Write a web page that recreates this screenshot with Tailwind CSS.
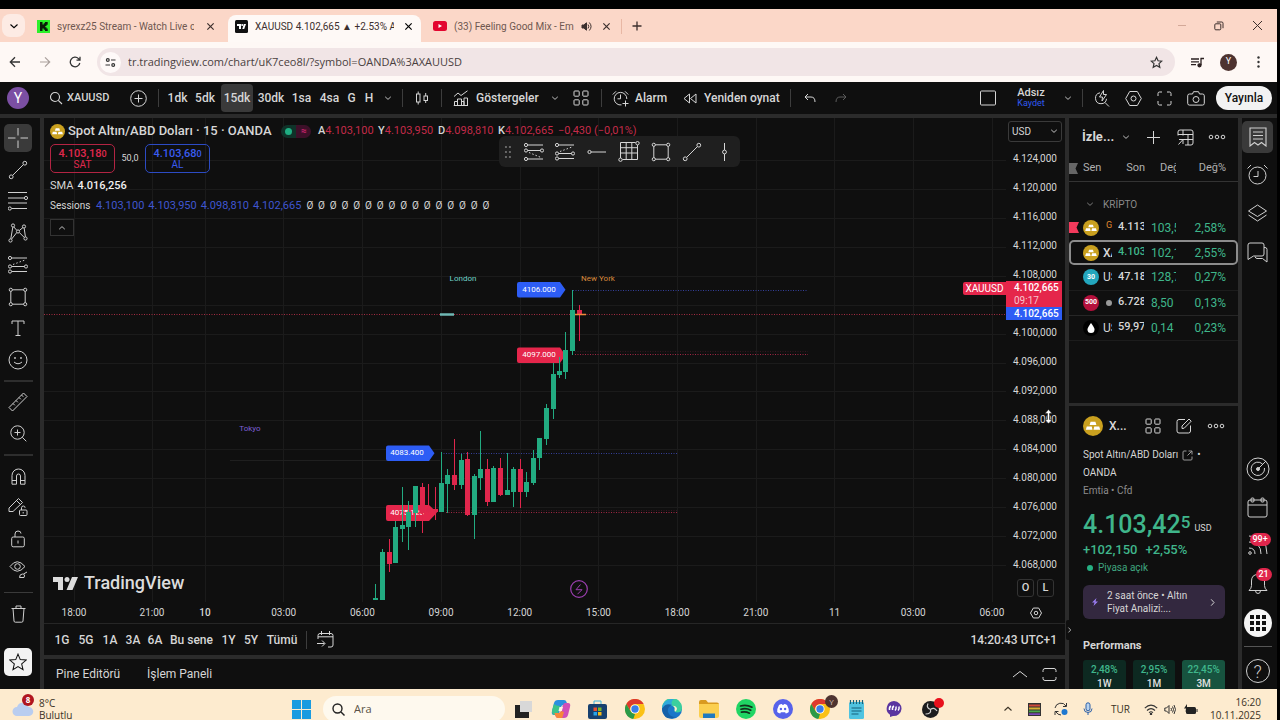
<!DOCTYPE html>
<html lang="tr">
<head>
<meta charset="utf-8">
<title>XAUUSD 4.102,665 ▲ +2.53% Adsız</title>
<script src="https://cdn.jsdelivr.net/npm/@tailwindcss/browser@4"></script>
</head>
<body class="bg-black">
<svg class="hidden" aria-hidden="true">
  <symbol id="chev" viewBox="0 0 10 10"><path d="M1.5 3.5 5 6.7 8.5 3.5" fill="none" stroke="currentColor" stroke-width="1.1"/></symbol>
  <symbol id="x" viewBox="0 0 10 10"><path d="M1.5 1.5l7 7M8.5 1.5l-7 7" fill="none" stroke="currentColor" stroke-width="1.3"/></symbol>
  <symbol id="more" viewBox="0 0 18 8"><g fill="none" stroke="currentColor"><circle cx="3" cy="4" r="1.8"/><circle cx="9" cy="4" r="1.8"/><circle cx="15" cy="4" r="1.8"/></g></symbol>
  <symbol id="tiles" viewBox="0 0 16 16"><g fill="none" stroke="currentColor"><rect x="1" y="1" width="5.200" height="5.200" rx=".8"/><rect x="9.800" y="1" width="5.200" height="5.200" rx=".8"/><rect x="1" y="9.800" width="5.200" height="5.200" rx=".8"/><rect x="9.800" y="9.800" width="5.200" height="5.200" rx=".8"/></g></symbol>
  <symbol id="gold" viewBox="0 0 20 20"><circle cx="10" cy="10" r="10" fill="#c9a01f"/><path d="M7.600 5.800h4.800l1 3.300H6.600zM3.800 10.400h4.900l.8 3.300H2.800zM11.300 10.400h4.900l1 3.300h-6.700z" fill="#fff"/></symbol>
  <symbol id="trend" viewBox="0 0 20 20"><g fill="none" stroke="currentColor"><circle cx="3.200" cy="16.800" r="1.900"/><circle cx="16.800" cy="3.200" r="1.900"/><path d="M4.600 15.400 15.400 4.600"/></g></symbol>
  <symbol id="rect" viewBox="0 0 20 20"><g fill="none" stroke="currentColor"><path d="M4.500 2.800h11M4.500 17.200h11M2.800 4.500v11M17.200 4.500v11"/><circle cx="2.800" cy="2.800" r="1.600"/><circle cx="17.200" cy="2.800" r="1.600"/><circle cx="2.800" cy="17.200" r="1.600"/><circle cx="17.200" cy="17.200" r="1.600"/></g></symbol>
  <symbol id="short" viewBox="0 0 20 20"><g fill="none" stroke="currentColor"><circle cx="2" cy="3" r="1.600"/><path d="M3.600 3H19M3.600 11.500h13M3.600 16.500H19"/><circle cx="2" cy="11.500" r="1.600"/><circle cx="18" cy="11.500" r="1.600"/><circle cx="2" cy="16.500" r="1.600"/><path d="M5 9.500l12-4.500" stroke-dasharray="1.500 2"/></g></symbol>
  <symbol id="long" viewBox="0 0 20 20"><g fill="none" stroke="currentColor"><circle cx="2" cy="3" r="1.600"/><path d="M3.600 3H19M3.600 8.500h13M3.600 17H19"/><circle cx="2" cy="8.500" r="1.600"/><circle cx="18" cy="8.500" r="1.600"/><circle cx="2" cy="17" r="1.600"/><path d="M5 10.500l12 5" stroke-dasharray="1.500 2"/></g></symbol>
  <symbol id="chrome" viewBox="0 0 20 20"><circle cx="10" cy="10" r="10" fill="#fbc116"/><path d="M1.300 5A10 10 0 0 1 18.700 5H10a5 5 0 0 0-4.300 7.500z" fill="#dd3a2e"/><path d="M1.300 5l4.400 7.500A5 5 0 0 0 10 15l-1.600 5A10 10 0 0 1 1.300 5z" fill="#2b9a48"/><path d="M14.300 12.500 10 20l-1.500-.1L12 14.600z" fill="#fbc116"/><circle cx="10" cy="10" r="4.600" fill="#fff"/><circle cx="10" cy="10" r="3.700" fill="#3a7de8"/></symbol>
</svg>

<div class="flex h-screen flex-col overflow-hidden pt-[9px] pr-[3px] font-['Roboto',sans-serif] text-[#d6d6d6]">

<!-- Browser tabs -->
<header class="shrink-0 text-[#3c2f2d]">
  <div class="flex h-[33px] items-center bg-[#fbd7c8] text-[10px]">
    <button aria-label="Sekme ara" class="ml-[2px] flex h-[23px] w-[23px] items-center justify-center rounded-lg bg-[#fdebe4] text-black"><svg class="size-[10px]"><use href="#chev"/></svg></button>
    <div class="mt-px ml-3 flex w-[191px] items-center">
      <svg class="size-[13px]" viewBox="0 0 13 13"><rect width="13" height="13" fill="#2df02a"/><path d="M3 2h2.500v2.500h1.200V3.300h1.200V2h2.800v2.800H9.500V6H8.300v1.200h1.200v1.200h1.200V11H8V9.800H6.700V8.600H5.500V11H3z" fill="#0a1a08"/></svg>
      <button class="ml-[7px] w-[137px] overflow-hidden text-left whitespace-nowrap text-[#6f5750]">syrexz25 Stream - Watch Live o</button>
      <button aria-label="Kapat" class="ml-3"><svg class="size-[9px]"><use href="#x"/></svg></button>
    </div>
    <div class="mt-[6px] flex h-[27px] w-[193px] items-center rounded-t-lg bg-[#fef9f6] pb-1 pl-[7px]">
      <svg class="size-[13px]" viewBox="0 0 13 13"><rect width="13" height="13" rx="1.500" fill="#111"/><path d="M2 4h4v5H4V6H2zM8.800 4H11L9.200 9H7.300z" fill="#fff"/><circle cx="7.200" cy="5" r="1" fill="#fff"/></svg>
      <button class="ml-[7px] w-[139px] overflow-hidden text-left whitespace-nowrap">XAUUSD 4.102,665 ▲ +2.53% A</button>
      <button aria-label="Kapat" class="ml-[10px] text-black"><svg class="size-[9px]"><use href="#x"/></svg></button>
    </div>
    <div class="mt-px ml-3 flex w-[189px] items-center border-r border-[#e8b7a4]">
      <svg class="h-[10px] w-[14px]" viewBox="0 0 14 10"><rect width="14" height="10" rx="2.500" fill="#e3062f"/><path d="M5.500 3v4L9 5z" fill="#fff"/></svg>
      <button class="ml-[7px] w-[121px] overflow-hidden text-left whitespace-nowrap text-[#6f5750]">(33) Feeling Good Mix - Em</button>
      <svg class="ml-[6px] size-[11px]" viewBox="0 0 11 11" fill="none" stroke="currentColor"><path d="M1 4h1.800L5.500 1.800v7.400L2.800 7H1z" fill="currentColor"/><path d="M7 3.500q1.500 2 0 4M8.300 1.500q3.500 4 0 8"/></svg>
      <button aria-label="Kapat" class="ml-[10px]"><svg class="size-[9px]"><use href="#x"/></svg></button>
    </div>
    <button aria-label="Yeni sekme" class="ml-[10px]"><svg class="size-[10px]" viewBox="0 0 10 10" stroke="currentColor" stroke-width="1.300"><path d="M5 .5v9M.5 5h9"/></svg></button>
    <div class="ml-auto flex items-center pr-[14px]">
      <button aria-label="Küçült" class="w-9"><svg class="mx-auto size-[10px]" viewBox="0 0 10 10" stroke="#d3a898"><path d="M1 4.500h8"/></svg></button>
      <button aria-label="Geri yükle" class="w-[37px]"><svg class="mx-auto size-[10px]" viewBox="0 0 10 10" fill="none" stroke="currentColor"><rect x=".8" y="2.800" width="6" height="6" rx="1"/><path d="M2.800 1h5q1.200 0 1.200 1.200v5"/></svg></button>
      <button aria-label="Pencereyi kapat" class="ml-[15px]"><svg class="size-[11px]" viewBox="0 0 11 11" stroke="currentColor"><path d="M1 1l9 9M10 1l-9 9"/></svg></button>
    </div>
  </div>
  <div class="flex h-10 items-center bg-[#fef8f5]">
    <button aria-label="Geri" class="w-[30px]"><svg class="mx-auto size-[12px]" viewBox="0 0 12 12" fill="none" stroke="#333" stroke-width="1.300"><path d="M11 6H1.500M6 1.300 1.300 6 6 10.700"/></svg></button>
    <button aria-label="İleri" class="w-[30px]"><svg class="mx-auto size-[12px]" viewBox="0 0 12 12" fill="none" stroke="#aaa09c" stroke-width="1.200"><path d="M1 6h9.500M6 1.300 10.700 6 6 10.700"/></svg></button>
    <button aria-label="Yenile" class="w-[30px]"><svg class="mx-auto size-[12px]" viewBox="0 0 12 12" fill="none" stroke="#333" stroke-width="1.300"><path d="M10.800 7A4.800 4.800 0 1 1 9.500 2.600L10.800 4M11 .8V4.200H7.500"/></svg></button>
    <div class="ml-[7px] flex h-7 flex-1 items-center rounded-full bg-[#f1e5e6] pr-[12px] pl-[3px]">
      <span class="flex size-[21px] items-center justify-center rounded-full bg-[#fef9f8]"><svg class="size-[11px]" viewBox="0 0 11 11" fill="none" stroke="#333" stroke-width="1.200"><circle cx="2.800" cy="3" r="1.400"/><path d="M6 3h4.500M.5 8H5"/><circle cx="8.200" cy="8" r="1.400"/></svg></span>
      <input aria-label="Adres çubuğu" class="ml-[7px] min-w-0 flex-1 bg-transparent font-['Open_Sans',sans-serif] text-[11px] text-[#4a3f40] outline-none" value="tr.tradingview.com/chart/uK7ceo8l/?symbol=OANDA%3AXAUUSD">
      <button aria-label="Yer işareti"><svg class="size-[13px]" viewBox="0 0 24 24" fill="none" stroke="#333" stroke-width="2.200"><path d="M12 2.500l2.900 6.300 6.800.7-5.100 4.600 1.500 6.800L12 17.400l-6.100 3.500 1.500-6.800L2.300 9.500l6.800-.7z"/></svg></button>
    </div>
    <button aria-label="Medya" class="ml-4"><svg class="size-[13px]" viewBox="0 0 13 13" fill="none" stroke="#2b2020" stroke-width="1.300"><path d="M0 3h8M0 5.800h8M0 8.600h5M10 2v7M9.500 2.500H13"/><circle cx="8.500" cy="9.300" r="1.500" fill="#2b2020"/></svg></button>
    <button class="ml-4 size-[17px] rounded-full bg-[#4e3330] text-[9px] text-white">Y</button>
    <button aria-label="Menü" class="mr-3 ml-[15px]"><svg class="h-3 w-[13px]" viewBox="0 0 13 12" fill="#333"><circle cx="6.500" cy="1.500" r="1.200"/><circle cx="6.500" cy="6" r="1.200"/><circle cx="6.500" cy="10.500" r="1.200"/></svg></button>
  </div>
</header>

<!-- TradingView top toolbar -->
<nav class="flex h-8 shrink-0 items-center bg-[#0f0f0f] text-[12px] font-medium">
  <div class="w-9"><span class="mx-auto flex size-[22px] items-center justify-center rounded-full bg-[#7b4fa3] text-[14px] font-normal text-white">Y</span></div>
  <button class="flex w-[88px] items-center pl-[13px]"><svg class="size-[14px]" viewBox="0 0 14 14" fill="none" stroke="currentColor" stroke-width="1.100"><circle cx="6" cy="6" r="4.500"/><path d="M9.300 9.300 13 13"/></svg><span class="ml-1 text-[11px]">XAUUSD</span></button>
  <button aria-label="Karşılaştır" class="w-7"><svg class="mx-auto size-[17px]" viewBox="0 0 17 17" fill="none" stroke="currentColor"><circle cx="8.500" cy="8.500" r="7.800"/><path d="M8.500 4.500v8M4.500 8.500h8"/></svg></button>
  <div class="flex w-3 justify-center"><i class="h-[18px] w-px bg-[#3d3d3d]"></i></div>
  <button class="w-[27px]">1dk</button>
  <button class="w-7">5dk</button>
  <button class="mx-[2px] h-7 w-8 rounded-[4px] bg-[#3a3a3a]">15dk</button>
  <button class="w-8">30dk</button>
  <button class="w-[29px]">1sa</button>
  <button class="w-[27px]">4sa</button>
  <button class="w-[17px]">G</button>
  <button class="w-[18px]">H</button>
  <button aria-label="Diğer zaman dilimleri" class="w-5"><svg class="mx-auto size-2"><use href="#chev"/></svg></button>
  <div class="flex w-2 justify-center"><i class="h-[18px] w-px bg-[#3d3d3d]"></i></div>
  <button aria-label="Mumlar" class="w-[31px]"><svg class="mx-auto size-[14px]" viewBox="0 0 14 14" fill="none" stroke="currentColor"><rect x="1.500" y="3" width="3.500" height="8"/><path d="M3.200.5V3M3.200 11v2.500M10.700 2v3M10.700 9.500V12"/><rect x="9" y="5" width="3.500" height="4.500"/></svg></button>
  <div class="flex w-2 justify-center"><i class="h-[18px] w-px bg-[#3d3d3d]"></i></div>
  <button class="flex w-[102px] items-center pl-2"><svg class="size-4" viewBox="0 0 16 16" fill="none" stroke="currentColor"><path d="M1 6.500 5 3l3 2.500L14.500.8M1.500 15.500v-4h3v4M4.500 15.500V9h4v6.500M8.500 15.500v-4h2.500v4M11 15.500V8h3.500v7.500M.8 15.500H15"/></svg><span class="ml-[7px]">Göstergeler</span></button>
  <button aria-label="Gösterge şablonları" class="w-4"><svg class="mx-auto size-2"><use href="#chev"/></svg></button>
  <button aria-label="Düzen" class="w-[35px]"><svg class="mx-auto size-4"><use href="#tiles"/></svg></button>
  <div class="flex w-[6px] justify-center"><i class="h-[18px] w-px bg-[#3d3d3d]"></i></div>
  <button class="flex w-[76px] items-center pl-2"><svg class="size-[17px]" viewBox="0 0 17 17" fill="none" stroke="currentColor"><path d="M9.500 14.900A6.300 6.300 0 1 1 14.800 9M8.500 4.500v4.300H5.500M.8 4.500 4 1.300M13 1.300l3.200 3.200M13.500 10.500v6M10.500 13.500h6"/></svg><span class="ml-[6px]">Alarm</span></button>
  <button class="flex w-[106px] items-center pl-[3px]"><svg class="h-[11px] w-[14px]" viewBox="0 0 14 11" fill="none" stroke="currentColor"><path d="M6.500 1v9L1 5.500zM13 1v9L7.500 5.500z"/></svg><span class="ml-[7px] whitespace-nowrap">Yeniden oynat</span></button>
  <div class="flex w-2 justify-center"><i class="h-[18px] w-px bg-[#3d3d3d]"></i></div>
  <button aria-label="Geri al" class="w-[31px]"><svg class="mx-auto size-3" viewBox="0 0 12 12" fill="none" stroke="currentColor"><path d="M4 2 1 5l3 3M1 5h6q4 0 4 5"/></svg></button>
  <button aria-label="Yinele" class="w-8 text-[#5c5c5c]"><svg class="mx-auto size-3" viewBox="0 0 12 12" fill="none" stroke="currentColor"><path d="M8 2l3 3-3 3M11 5H5q-4 0-4 5"/></svg></button>
  <div class="ml-auto flex items-center">
    <button aria-label="Yerleşim" class="w-8"><svg class="mx-auto size-4" viewBox="0 0 16 16" fill="none" stroke="currentColor"><rect x=".5" y="1" width="15" height="14" rx="1"/></svg></button>
    <button class="w-[54px] leading-[10px]"><span class="block text-[11px]">Adsız</span><span class="block text-[9px] font-normal text-[#2f5af0]">Kaydet</span></button>
    <button aria-label="Yerleşim menüsü" class="w-5"><svg class="mx-auto size-2"><use href="#chev"/></svg></button>
    <div class="flex w-2 justify-center"><i class="h-[18px] w-px bg-[#3d3d3d]"></i></div>
    <button aria-label="Hızlı arama" class="w-[31px]"><svg class="mx-auto size-[17px]" viewBox="0 0 17 17" fill="none" stroke="currentColor"><path d="M7 2.800a5.500 5.500 0 1 0 6.500 6M12 12.500l4 4M10.500.5 6.500 7h3l-.5 4 4.500-6.500h-3z"/></svg></button>
    <button aria-label="Ayarlar" class="w-8"><svg class="mx-auto size-[17px]" viewBox="0 0 17 17" fill="none" stroke="currentColor"><path d="M4.700 1.500h7.600l4 7-4 7H4.700l-4-7z"/><circle cx="8.500" cy="8.500" r="2.500"/></svg></button>
    <button aria-label="Tam ekran" class="w-[31px]"><svg class="mx-auto size-[15px]" viewBox="0 0 15 15" fill="none" stroke="currentColor"><path d="M1 5V2.500Q1 1 2.500 1H5M10 1h2.500Q14 1 14 2.500V5M14 10v2.500q0 1.500-1.500 1.500H10M5 14H2.500Q1 14 1 12.500V10"/></svg></button>
    <button aria-label="Ekran görüntüsü" class="w-[31px]"><svg class="mx-auto h-[15px] w-[18px]" viewBox="0 0 18 15" fill="none" stroke="currentColor"><path d="M2.500 3h3l1-2.300h5l1 2.300h3q1.800 0 1.800 1.800v7.500q0 1.800-1.800 1.800h-13Q.7 14.100.7 12.300V4.800Q.7 3 2.500 3z"/><circle cx="9" cy="8.500" r="3"/></svg></button>
    <button class="mx-[5px] h-6 w-14 rounded-full bg-[#f2f2f2] text-[#111]">Yayınla</button>
  </div>
</nav>

<!-- Workspace -->
<main class="flex min-h-0 flex-1 gap-1 bg-[#2b2b2b] pt-1">

  <!-- Drawing tools -->
  <aside class="flex w-10 shrink-0 flex-col bg-[#0f0f0f] pt-[6px] pl-1 text-[#cfcfcf]">
    <div class="flex h-[250px] flex-col justify-between">
      <button aria-label="İmleç" class="flex size-7 items-center justify-center rounded-[5px] bg-[#3a3a3a]"><svg class="size-5" viewBox="0 0 20 20" stroke="currentColor"><path d="M10 0v7.500M10 12.500V20M0 10h7.500M12.500 10H20"/></svg></button>
      <button aria-label="Trend çizgisi" class="flex size-7 items-center justify-center"><svg class="size-5"><use href="#trend"/></svg></button>
      <button aria-label="Fibonacci" class="flex size-7 items-center justify-center"><svg class="size-5" viewBox="0 0 20 20" fill="none" stroke="currentColor"><path d="M0 1.500h19M0 7h16.500M0 12h19M3.500 17.500H19"/><circle cx="18" cy="7" r="1.600"/><circle cx="1.800" cy="17.500" r="1.600"/></svg></button>
      <button aria-label="Formasyonlar" class="flex size-7 items-center justify-center"><svg class="size-5" viewBox="0 0 20 20" fill="none" stroke="currentColor"><circle cx="5" cy="2.500" r="1.600"/><circle cx="2.500" cy="17.500" r="1.600"/><circle cx="10" cy="8.500" r="1.600"/><circle cx="16" cy="3.500" r="1.600"/><circle cx="17.500" cy="15.500" r="1.600"/><path d="M4.800 4.200 2.800 15.800M5.800 4l3 3.300M11.300 7.500 15 4.500M16.200 5.200l1.200 8.600M8.800 9.500 3.500 16.200M11.300 9.500l5 5"/></svg></button>
      <button aria-label="Tahmin" class="flex size-7 items-center justify-center"><svg class="size-5"><use href="#short"/></svg></button>
      <button aria-label="Dikdörtgen" class="flex size-7 items-center justify-center"><svg class="size-5"><use href="#rect"/></svg></button>
      <button aria-label="Metin" class="flex size-7 items-center justify-center"><svg class="size-5" viewBox="0 0 20 20" fill="none" stroke="currentColor"><path d="M4 6V3h12v3M10 3v14M7.500 17.500h5"/></svg></button>
      <button aria-label="Simgeler" class="flex size-7 items-center justify-center"><svg class="size-5" viewBox="0 0 20 20" fill="none" stroke="currentColor"><circle cx="10" cy="10" r="9"/><path d="M6 12q4 3.500 8 0"/><circle cx="7" cy="8" r=".6"/><circle cx="13" cy="8" r=".6"/></svg></button>
    </div>
    <hr class="mt-[6px] w-[29px] border-t-2 border-[#2e2e2e]">
    <div class="mt-[6px] flex h-[59px] flex-col justify-between">
      <button aria-label="Ölçüm" class="flex size-7 items-center justify-center"><svg class="size-5" viewBox="0 0 20 20" fill="none" stroke="currentColor"><path d="M1 15.500 15.500 1 19 4.500 4.500 19zM5 11.500l1.800 1.800M8 8.500l1.800 1.800M11 5.500l1.800 1.800M13.500 3l1.800 1.800"/></svg></button>
      <button aria-label="Yakınlaştır" class="flex size-7 items-center justify-center"><svg class="size-[17px]" viewBox="0 0 17 17" fill="none" stroke="currentColor"><circle cx="7.500" cy="7.500" r="6.700"/><path d="M7.500 4.500v6M4.500 7.500h6M12.300 12.300l4 4"/></svg></button>
    </div>
    <hr class="mt-[7px] w-[29px] border-t-2 border-[#2e2e2e]">
    <div class="mt-[6px] flex h-[122px] flex-col justify-between">
      <button aria-label="Mıknatıs" class="flex size-7 items-center justify-center"><svg class="h-[17px] w-[15px]" viewBox="0 0 15 17" fill="none" stroke="currentColor"><path d="M1 16.200V7.500a6.500 6.500 0 0 1 13 0v8.700H9.500V8a2 2 0 0 0-4 0v8.200zM1 12.500h4.500M9.500 12.500H14"/></svg></button>
      <button aria-label="Çizim modunda kal" class="flex size-7 items-center justify-center"><svg class="size-5" viewBox="0 0 20 20" fill="none" stroke="currentColor"><path d="M1 14.500V11L10.500 1.500l4 4L5 14.500zM8.500 3.500l4 4"/><rect x="11.500" y="13" width="7.500" height="5.500" rx="1"/><path d="M13.500 13v-2.200q0-1.800 1.800-1.800t1.800 1.800M15.200 15v1.500"/></svg></button>
      <button aria-label="Kilitle" class="flex size-7 items-center justify-center"><svg class="h-[18px] w-[14px]" viewBox="0 0 14 18" fill="none" stroke="currentColor"><rect x=".7" y="7" width="12.600" height="9.800" rx="1.500"/><path d="M4 7V4q0-3 3-3t3 2.500M7 10.500v3"/></svg></button>
      <button aria-label="Gizle" class="flex size-7 items-center justify-center"><svg class="size-[19px]" viewBox="0 0 19 19" fill="none" stroke="currentColor"><path d="M1 6.500Q8 -3 16 6.500 8 16 1 6.500z"/><circle cx="8.500" cy="6.500" r="2.800"/><path d="M10.500 17.500q0-3.500 3-3.500t1.500 3.500zM14.500 14l3.500-2"/></svg></button>
    </div>
    <hr class="mt-2 w-[29px] border-[#3a3a3a]">
    <button aria-label="Sil" class="mt-[7px] flex size-7 items-center justify-center"><svg class="h-[18px] w-[15px]" viewBox="0 0 15 18" fill="none" stroke="currentColor"><path d="M.5 3.500h14M5 3.500V1h5v2.500M2 3.500l1 12.500q.1 1.200 1.300 1.200h6.400q1.200 0 1.300-1.200l1-12.500"/></svg></button>
    <button aria-label="Favoriler" class="mt-5 flex size-7 items-center justify-center rounded-[5px] bg-[#f3f3f3]"><svg class="size-[18px]" viewBox="0 0 24 24" fill="none" stroke="#111" stroke-width="1.400"><path d="M12 1.500l3 7.300 7.900.6-6 5.200 1.800 7.700L12 18.200l-6.700 4.100 1.800-7.700-6-5.200 7.900-.6z"/></svg></button>
  </aside>

  <!-- Chart column -->
  <section class="relative flex min-w-0 flex-1 flex-col gap-1">
    <div class="flex min-h-0 flex-1 flex-col bg-[#0f0f0f]">
      <div class="flex min-h-0 flex-1">
        <div class="relative min-w-0 flex-1 overflow-hidden">
          <svg class="block h-full w-full text-[8px]">
            <g transform="translate(-44 -118)">
              <g id="grid" stroke="#1b1b1b"></g>
              <path d="M230 460.500H440" stroke="#1f1f1f"/>
              <g fill="none" stroke-dasharray="1 1.500">
                <path d="M573 290.500H808M441 453.500H677" stroke="#34409a"/>
                <path d="M575 354.500H808M446 512.500H677" stroke="#a12744"/>
                <path d="M575 351.500H808M446 510.500H677" stroke="#33161f"/>
                <path d="M44 314.500H1006" stroke="#a52c43"/>
              </g>
              <path d="M519 282h41l5.500 7.800-5.500 7.700h-41q-2 0-2-2v-11.500q0-2 2-2zM388 445.500h41l5.500 7.800-5.500 7.700h-41q-2 0-2-2v-11.500q0-2 2-2z" fill="#2d5df5"/>
              <path d="M519 347.500h41l5.500 7.800-5.500 7.700h-41q-2 0-2-2v-11.500q0-2 2-2zM388 505h41l8 7.500-8 8.500h-41q-2 0-2-2v-12q0-2 2-2z" fill="#e5264b"/>
              <g fill="#fff" text-anchor="middle"><text x="539" y="292">4106.000</text><text x="539" y="357">4097.000</text><text x="407" y="455">4083.400</text><text x="407" y="515">4075.125</text></g>
              <g text-anchor="middle"><text x="463" y="281" fill="#6fd3c9">London</text><text x="598" y="281" fill="#d98a3c">New York</text><text x="250" y="431" fill="#7d5fd6">Tokyo</text></g>
              <g id="candles"></g>
              <path d="M440 314.500h14" stroke="#6fb8b4" stroke-width="2.500"/>
              <path d="M575 314.500h11" stroke="#f08a3c" stroke-width="1.500"/>
              <g fill="none" stroke="#9c3fb0"><circle cx="579" cy="589" r="8.300" stroke-width="1.200"/><path d="M580.500 584.500l-4.500 5.200h6l-4.500 4.500"/></g>
            </g>
          </svg>

          <!-- Legend -->
          <div class="absolute top-[5px] left-[6px] text-[10px] leading-4">
            <div class="flex h-4 items-center whitespace-nowrap">
              <svg class="size-[15px]"><use href="#gold"/></svg>
              <h1 class="ml-[3px] w-[213px] text-[13px] font-medium">Spot Altın/ABD Doları · 15 · OANDA</h1>
              <span class="flex h-[13px] w-[30px] items-center justify-around rounded-full bg-linear-to-r from-[#0f3329] from-50% to-[#3d1029] to-50% text-[#d1246e]"><i class="size-[7px] rounded-full bg-[#1fae82]"></i><b class="text-[10px]">≈</b></span>
              <dl class="ml-[7px] flex text-[11px] text-[#c42b49]">
                <div class="flex w-[60px]"><dt class="font-medium text-[#d6d6d6]">A</dt><dd>4.103,100</dd></div>
                <div class="flex w-[60px]"><dt class="font-medium text-[#d6d6d6]">Y</dt><dd>4.103,950</dd></div>
                <div class="flex w-[60px]"><dt class="font-medium text-[#d6d6d6]">D</dt><dd>4.098,810</dd></div>
                <div class="flex w-[60px]"><dt class="font-medium text-[#d6d6d6]">K</dt><dd>4.102,665</dd></div>
                <dd>−0,430 (−0,01%)</dd>
              </dl>
            </div>
            <div class="mt-[5px] flex items-center text-center leading-[11px]">
              <button class="h-[29px] w-[65px] rounded-[5px] border border-[#b32443] text-[#e0284e]"><span class="block text-[11px] font-medium">4.103,18<sup class="top-0 text-[9px]">0</sup></span><span class="block">SAT</span></button>
              <span class="w-[30px] text-[9px]">50,0</span>
              <button class="h-[29px] w-[65px] rounded-[5px] border border-[#2c4bc4] text-[#3a5cf0]"><span class="block text-[11px] font-medium">4.103,68<sup class="top-0 text-[9px]">0</sup></span><span class="block">AL</span></button>
            </div>
            <p class="mt-[5px] flex text-[11px]">SMA<b class="ml-1 font-medium text-[#f0f0f0]">4.016,256</b></p>
            <p class="mt-1 flex gap-1 text-[11px] text-[#3f56cf]"><span class="w-[42px] text-[10px] text-[#d6d6d6]">Sessions</span><span>4.103,100</span><span>4.103,950</span><span>4.098,810</span><span>4.102,665</span><span class="ml-px flex w-[183px] justify-between text-[10px] text-[#d6d6d6]"><b class="font-normal">Ø</b><b class="font-normal">Ø</b><b class="font-normal">Ø</b><b class="font-normal">Ø</b><b class="font-normal">Ø</b><b class="font-normal">Ø</b><b class="font-normal">Ø</b><b class="font-normal">Ø</b><b class="font-normal">Ø</b><b class="font-normal">Ø</b><b class="font-normal">Ø</b><b class="font-normal">Ø</b><b class="font-normal">Ø</b><b class="font-normal">Ø</b><b class="font-normal">Ø</b><b class="font-normal">Ø</b></span></p>
            <button aria-label="Göstergeleri gizle" class="mt-[5px] flex h-[17px] w-6 items-center justify-center border border-[#333]"><svg class="size-2 rotate-180"><use href="#chev"/></svg></button>
          </div>

          <!-- Favourite drawing tools -->
          <div class="absolute top-[18px] left-[455px] flex h-[31px] w-[241px] items-center rounded-md bg-[#1f1f1f] pl-[2px]">
            <svg class="h-3 w-[14px]" viewBox="0 0 14 12" fill="#666"><path d="M4 0h2v2H4zM8 0h2v2H8zM4 5h2v2H4zM8 5h2v2H8zM4 10h2v2H4zM8 10h2v2H8z"/></svg>
            <button aria-label="Uzun pozisyon" class="ml-[3px] flex w-8 justify-center"><svg class="size-5"><use href="#long"/></svg></button>
            <button aria-label="Kısa pozisyon" class="flex w-8 justify-center"><svg class="size-5"><use href="#short"/></svg></button>
            <button aria-label="Yatay ışın" class="flex w-8 justify-center"><svg class="size-5" viewBox="0 0 20 20" fill="none" stroke="currentColor"><circle cx="2.500" cy="10" r="1.600"/><path d="M4 10h15"/></svg></button>
            <button aria-label="Izgara" class="flex w-8 justify-center"><svg class="h-[21px] w-[22px]" viewBox="0 0 22 21" fill="none" stroke="currentColor"><path d="M2.500 1.500h15M2.500 1.500V17M2.500 6.700h17M2.500 12h17M4.500 18.500h15M8.200 1.500v17M13.800 1.500v17M19.500 4v14.500"/><circle cx="19.500" cy="2.200" r="1.700"/><circle cx="2.500" cy="18.700" r="1.700"/></svg></button>
            <button aria-label="Dikdörtgen" class="flex w-8 justify-center"><svg class="size-5"><use href="#rect"/></svg></button>
            <button aria-label="Trend çizgisi" class="flex w-8 justify-center"><svg class="size-5"><use href="#trend"/></svg></button>
            <button aria-label="Dikey çizgi" class="flex w-8 justify-center"><svg class="size-5" viewBox="0 0 20 20" fill="none" stroke="currentColor"><path d="M10.500 1v7M10.500 12v7"/><circle cx="10.500" cy="10" r="1.900"/></svg></button>
          </div>

          <!-- Brand -->
          <a href="#" class="absolute bottom-[9px] left-[9px] flex items-center gap-[6px] text-[18px] leading-5 font-medium text-[#dcdcdc]"><svg class="h-[13px] w-[25px]" viewBox="0 0 25 13" fill="currentColor"><path d="M0 0h10v13H5V5H0zM19 0h6l-5.500 13h-6z"/><circle cx="14" cy="2.500" r="2.500"/></svg>TradingView</a>
          <span class="absolute top-[164px] right-0 flex h-[13px] w-[43px] items-center justify-center rounded-l-[2px] bg-[#e5264b] text-[10px] text-white">XAUUSD</span>
        </div>

        <!-- Price scale -->
        <div class="relative flex w-[59px] shrink-0 flex-col">
          <div class="relative mt-[3px] ml-[2px] w-[54px]">
            <select aria-label="Para birimi" class="block h-[21px] w-full appearance-none rounded-[3px] border border-[#3a3a3a] bg-[#0f0f0f] pl-[3px] text-[10px]"><option>USD</option></select>
            <svg class="pointer-events-none absolute top-[6px] right-1 size-2"><use href="#chev"/></svg>
          </div>
          <ol class="mt-[11px] flex flex-1 flex-col justify-between pl-[7px] text-[10px] leading-3">
            <li>4.124,000</li><li>4.120,000</li><li>4.116,000</li><li>4.112,000</li><li>4.108,000</li><li>&nbsp;</li><li>4.100,000</li><li>4.096,000</li><li>4.092,000</li><li>4.088,000</li><li>4.084,000</li><li>4.080,000</li><li>4.076,000</li><li>4.072,000</li><li>4.068,000</li>
          </ol>
          <div class="mt-2 mb-[5px] ml-[11px] flex gap-[3px] text-[11px] font-medium">
            <button class="h-[18px] w-[17px] rounded-[3px] border border-[#333]">O</button>
            <button class="h-[18px] w-[17px] rounded-[3px] border border-[#333]">L</button>
          </div>
          <div class="absolute top-[163px] left-0 w-14 text-[10px] leading-[13px] font-medium text-white">
            <p class="bg-[#e5264b] pl-2">4.102,665<br><span class="font-normal text-[#f6c4ce]">09:17</span></p>
            <p class="bg-[#2d5df5] pl-2">4.102,665</p>
          </div>
          <svg class="absolute top-[291px] left-[38px] h-[15px] w-[9px]" viewBox="0 0 9 15" fill="#fff" stroke="#222" stroke-width=".6"><path d="M4.500.5 8 4.500H5.500v6H8l-3.500 4-3.500-4h2.500v-6H1z"/></svg>
        </div>
      </div>

      <!-- Time scale -->
      <div class="flex h-[21px] shrink-0 items-center pl-2 text-center text-[10px]">
        <span class="w-11">18:00</span><span class="ml-[34px] w-11">21:00</span>
        <div class="ml-[9px] flex flex-1 justify-between"><b class="w-11 font-medium">10</b><span class="w-11">03:00</span><span class="w-11">06:00</span><span class="w-11">09:00</span><span class="w-11">12:00</span><span class="w-11">15:00</span><span class="w-11">18:00</span><span class="w-11">21:00</span><span class="w-11">11</span><span class="w-11">03:00</span><span class="w-11">06:00</span></div>
        <button aria-label="Eksen ayarları" class="mr-[23px] ml-4"><svg class="size-3" viewBox="0 0 17 17" fill="none" stroke="currentColor" stroke-width="1.400"><path d="M4.700 1.500h7.600l4 7-4 7H4.700l-4-7z"/><circle cx="8.500" cy="8.500" r="2.500"/></svg></button>
      </div>

      <!-- Ranges -->
      <div class="flex h-8 shrink-0 items-center border-t border-[#262626] pl-[6px] text-[12px] font-medium">
        <button class="w-6">1G</button><button class="w-6">5G</button><button class="w-6">1A</button><button class="w-[22px]">3A</button><button class="w-[22px]">6A</button><button class="w-[51px] whitespace-nowrap">Bu sene</button><button class="w-[23px]">1Y</button><button class="w-[22px]">5Y</button><button class="w-10">Tümü</button>
        <i class="ml-1 h-[18px] w-px bg-[#3d3d3d]"></i>
        <button aria-label="Tarihe git" class="ml-[10px]"><svg class="size-[17px]" viewBox="0 0 17 17" fill="none" stroke="currentColor"><path d="M1 8V4.500Q1 2.500 3 2.500h11q2 0 2 2V14q0 2-2 2h-3M1 5.800h15M4.500 0v4M12.500 0v4M0 12.500h7.500M5 9.500l3 3-3 3"/></svg></button>
        <span class="mr-2 ml-auto">14:20:43 UTC+1</span>
      </div>
    </div>

    <div class="flex h-[30px] shrink-0 items-center bg-[#0f0f0f] pl-3 text-[12px]">
      <button class="w-[91px] text-left">Pine Editörü</button>
      <button>İşlem Paneli</button>
      <button aria-label="Paneli aç" class="ml-auto"><svg class="h-2 w-4" viewBox="0 0 16 8" fill="none" stroke="currentColor"><path d="M1 7l7-5.500L15 7"/></svg></button>
      <button aria-label="Paneli büyüt" class="mr-2 ml-[14px]"><svg class="size-[15px]" viewBox="0 0 15 15" fill="none" stroke="currentColor"><path d="M1 5V3.500Q1 1.500 3 1.500h9q2 0 2 2V5M1 10v1.500q0 2 2 2h9q2 0 2-2V10"/></svg></button>
    </div>
    <button aria-label="Yan paneli gizle" class="absolute -right-2 bottom-[49px] z-10 flex h-5 w-[7px] items-center justify-center rounded-[2px] bg-[#0f0f0f]"><svg class="size-2 -rotate-90"><use href="#chev"/></svg></button>
  </section>

  <!-- Watchlist and details -->
  <section class="flex w-[169px] shrink-0 flex-col gap-[3px]">
    <div class="h-[285px] bg-[#0f0f0f]">
      <div class="flex h-[38px] items-center pl-[13px]">
        <button class="w-9 text-left text-[13px] font-bold">İzle...</button>
        <svg class="ml-1 size-2"><use href="#chev"/></svg>
        <button aria-label="Sembol ekle" class="ml-[17px]"><svg class="size-[13px]" viewBox="0 0 13 13" stroke="currentColor"><path d="M6.500 0v13M0 6.500h13"/></svg></button>
        <button aria-label="Tablo görünümü" class="ml-[17px]"><svg class="size-[17px]" viewBox="0 0 17 17" fill="none" stroke="currentColor"><path d="M1 6.500V3Q1 1 3 1h11q2 0 2 2v11q0 2-2 2H8M1 5.500h15M6 1v5.500M11 5.500V16M6 10.500h10M1.500 15.500l4.500-5M2 10.500h4V15"/></svg></button>
        <button aria-label="Diğer" class="ml-[14px]"><svg class="h-2 w-[18px]"><use href="#more"/></svg></button>
      </div>
      <table class="w-full table-fixed text-left text-[12px]">
        <colgroup><col class="w-[14px]"><col class="w-5"><col class="w-[11px]"><col class="w-[31px]"><col class="w-[31px]"><col></colgroup>
        <thead class="text-[11px] text-[#b0b0b0]">
          <tr class="h-[25px] border-b border-[#333]"><th><svg class="h-[11px] w-[9px]" viewBox="0 0 9 11" fill="#666"><path d="M0 0h9L6.500 5.500 9 11H0z"/></svg></th><th colspan="2" class="font-normal">Sen</th><th class="text-right font-normal">Son</th><th class="pl-[15px] font-normal"><div class="w-4 overflow-hidden">Değ</div></th><th class="pr-3 text-right font-normal">Değ%</th></tr>
        </thead>
        <tbody>
          <tr class="h-[34px] text-[10px] text-[#8a8a8a]"><td></td><td class="pt-3"><svg class="ml-[3px] size-2"><use href="#chev"/></svg></td><td colspan="4" class="pt-3">KRİPTO</td></tr>
          <tr class="h-[25px]"><td><svg class="h-[11px] w-[10px]" viewBox="0 0 10 11" fill="#f23a5c"><path d="M0 0h10L7.500 5.500 10 11H0z"/></svg></td><td><svg class="size-4"><use href="#gold"/></svg></td><td class="pb-1 pl-[3px] text-[9px] text-[#e08a2e]">G</td><td class="pl-1 text-[11px] font-medium"><div class="w-[26px] overflow-hidden">4.113</div></td><td class="pl-[6px] text-[#3fb68b]"><div class="w-[25px] overflow-hidden">103,5</div></td><td class="pr-3 text-right text-[#3fb68b]">2,58%</td></tr>
          <tr class="h-[25px] rounded-[5px] outline-2 -outline-offset-2 outline-[#8c8c8c]"><td></td><td><svg class="size-4"><use href="#gold"/></svg></td><td><div class="w-[9px] overflow-hidden font-medium">XA</div></td><td class="pl-1 text-[11px] font-medium text-[#3fb68b]"><div class="w-[26px] overflow-hidden">4.103</div></td><td class="pl-[6px] text-[#3fb68b]"><div class="w-[25px] overflow-hidden">102,1</div></td><td class="pr-3 text-right text-[#3fb68b]">2,55%</td></tr>
          <tr class="h-[25px] border-b border-[#1c1c1c]"><td></td><td><span class="flex size-4 items-center justify-center rounded-full bg-[#23a6bd] text-[7px] font-bold text-white">30</span></td><td><div class="w-[9px] overflow-hidden">US</div></td><td class="pl-1 text-[11px] font-medium"><div class="w-[26px] overflow-hidden">47.18</div></td><td class="pl-[6px] text-[#3fb68b]"><div class="w-[25px] overflow-hidden">128,7</div></td><td class="pr-3 text-right text-[#3fb68b]">0,27%</td></tr>
          <tr class="h-[25px] border-b border-[#262626]"><td></td><td><span class="flex size-4 items-center justify-center rounded-full bg-[#b5103c] text-[7px] font-bold text-white">500</span></td><td><i class="ml-[3px] block size-[6px] rounded-full bg-[#9a9a9a]"></i></td><td class="pl-1 text-[11px] font-medium"><div class="w-[26px] overflow-hidden">6.728</div></td><td class="pl-[6px] text-[#3fb68b]">8,50</td><td class="pr-3 text-right text-[#3fb68b]">0,13%</td></tr>
          <tr class="h-[25px] border-b border-[#1c1c1c]"><td></td><td><span class="flex size-4 items-center justify-center rounded-full bg-black"><svg class="h-[10px] w-2" viewBox="0 0 8 10" fill="#fff"><path d="M4 0q3.500 4.500 3.500 6.500a3.500 3.500 0 0 1-7 0Q.5 4.500 4 0z"/></svg></span></td><td><div class="w-[9px] overflow-hidden">US</div></td><td class="pl-1 text-[11px] font-medium"><div class="w-[26px] overflow-hidden">59,97</div></td><td class="pl-[6px] text-[#3fb68b]">0,14</td><td class="pr-3 text-right text-[#3fb68b]">0,23%</td></tr>
        </tbody>
      </table>
    </div>
    <div class="min-h-0 flex-1 overflow-hidden bg-[#0f0f0f] pr-[13px] pl-[14px]">
      <div class="flex h-10 items-center">
        <svg class="size-5"><use href="#gold"/></svg>
        <b class="ml-[6px] w-[36px] text-[12px] font-medium">X...</b>
        <svg class="size-4"><use href="#tiles"/></svg>
        <svg class="ml-[15px] size-4" viewBox="0 0 16 16" fill="none" stroke="currentColor"><path d="M9 1.500H3Q1 1.500 1 3.500V13q0 2 2 2h9.500q2 0 2-2V7.500M6 10.500V8l7-7 2.200 2.200-7 7z"/></svg>
        <svg class="ml-[15px] h-2 w-[18px] shrink-0"><use href="#more"/></svg>
      </div>
      <p class="flex items-center text-[10px] leading-[18px] whitespace-nowrap">Spot Altın/ABD Doları<svg class="mr-1 ml-1 size-[11px]" viewBox="0 0 11 11" fill="none" stroke="#999"><path d="M4.500 1H2Q1 1 1 2v7q0 1 1 1h7q1 0 1-1V6.500M6.500 1H10v3.500M10 1 5.500 5.500"/></svg>•</p>
      <p class="text-[10px] leading-[18px]">OANDA</p>
      <p class="text-[10px] leading-[18px] text-[#8c8c8c]">Emtia • Cfd</p>
      <p class="mt-[10px] flex h-[30px] items-center whitespace-nowrap text-[#3fb68b]"><b class="text-[25px] font-medium">4.103,42</b><b class="mb-[5px] text-[17px] font-medium">5</b><small class="mt-2 ml-1 text-[9px] text-[#d6d6d6]">USD</small></p>
      <p class="mt-[2px] flex gap-2 text-[13px] leading-4 font-medium text-[#3fb68b]"><span>+102,150</span><span>+2,55%</span></p>
      <p class="mt-[2px] flex items-center gap-[5px] pl-1 text-[10px] leading-4 text-[#3fa57f]"><i class="size-[6px] rounded-full bg-[#26b083]"></i>Piyasa açık</p>
      <a href="#" class="mt-[9px] flex h-[34px] items-center rounded-md bg-[#33283f] text-[10px] leading-[13px]"><svg class="mx-[9px] h-2 w-[6px] shrink-0" viewBox="0 0 6 8" fill="#9a7cf0"><path d="M4.500 0 0 4.500h2.500L1.500 8 6 3.500H3.500z"/></svg><span class="flex-1">2 saat önce • Altın<br>Fiyat Analizi:...</span><svg class="mr-2 size-[9px] -rotate-90"><use href="#chev"/></svg></a>
      <h2 class="mt-[19px] text-[11px] leading-4 font-bold">Performans</h2>
      <div class="mt-[6px] grid grid-cols-3 gap-[7px] text-center text-[10px] leading-[14px] font-medium text-[#e0e0e0]">
        <p class="rounded-[3px] bg-[#0d2921] pt-[3px]"><span class="block text-[#3fb68b]">2,48%</span>1W</p>
        <p class="rounded-[3px] bg-[#0d2921] pt-[3px]"><span class="block text-[#3fb68b]">2,95%</span>1M</p>
        <p class="rounded-[3px] bg-[#17533f] pt-[3px]"><span class="block text-[#3fb68b]">22,45%</span>3M</p>
      </div>
    </div>
  </section>

  <!-- Right rail -->
  <aside class="flex w-[35px] shrink-0 flex-col items-center bg-[#0f0f0f] pr-1 text-[#d0d0d0]">
    <button aria-label="İzleme listesi" class="mt-[3px] flex h-8 w-[31px] shrink-0 items-center justify-center rounded-[5px] bg-[#3a3a3a]"><svg class="size-5" viewBox="0 0 20 20" fill="none" stroke="currentColor" stroke-width="1.100"><path d="M2 1h16v18l-4.500-3.500L10 18l-3.500-2.500L2 19zM5 5h10M5 8.500h10M5 12h10"/></svg></button>
    <button aria-label="Alarmlar" class="mt-[11px] shrink-0"><svg class="size-[21px]" viewBox="0 0 21 21" fill="none" stroke="currentColor"><circle cx="10.500" cy="11.500" r="8.500"/><path d="M11 7v5.500H6.500M.5 4.500 4 1M17 1l3.500 3.500"/></svg></button>
    <button aria-label="Nesne ağacı" class="mt-[19px] shrink-0"><svg class="h-[18px] w-[21px]" viewBox="0 0 21 18" fill="none" stroke="currentColor"><path d="M10.500 1l9 6-9 5.500-9-5.500zM1.500 11l9 6 9-6"/></svg></button>
    <button aria-label="Sohbet" class="mt-5 shrink-0"><svg class="size-[21px]" viewBox="0 0 21 21" fill="none" stroke="currentColor"><path d="M3 1h12q2 0 2 2v9q0 2-2 2H6.500L1 17.500V3q0-2 2-2zM17 5.500h1q2 0 2 2V20l-4.500-3.500H10q-1.500 0-2-2"/></svg></button>
    <button aria-label="Tarayıcılar" class="mt-auto shrink-0"><svg class="size-6" viewBox="0 0 24 24" fill="none" stroke="currentColor"><circle cx="12" cy="12" r="11"/><path d="M16.500 7A6.700 6.700 0 1 0 18.500 11M12 12l8-8"/><circle cx="12" cy="12" r="1.500" fill="currentColor"/></svg></button>
    <button aria-label="Takvim" class="mt-4 shrink-0"><svg class="size-[21px]" viewBox="0 0 21 21" fill="none" stroke="currentColor"><path d="M3 3h15q2 0 2 2v13q0 2-2 2H3q-2 0-2-2V5q0-2 2-2zM1 8h19"/><rect x="4" y="1" width="3" height="4" rx="1"/><rect x="14" y="1" width="3" height="4" rx="1"/></svg></button>
    <button aria-label="Haberler, 99+" class="relative mt-[17px] shrink-0"><svg class="size-5" viewBox="0 0 20 20" fill="none" stroke="currentColor"><path d="M1 1q18 0 18 18M1 7q12 0 12 12M1 13q6 0 6 6"/><circle cx="2" cy="18" r="1.300"/></svg><span class="absolute -top-[2px] left-[2px] rounded-full bg-[#e0264c] px-[3px] text-[9px] leading-[13px] font-medium text-white">99+</span></button>
    <button aria-label="Bildirimler, 21" class="relative mt-[17px] shrink-0"><svg class="h-[23px] w-5" viewBox="0 0 20 23" fill="none" stroke="currentColor"><path d="M1 18.500q2.500-2 2.500-5V9q0-6.500 6.500-6.500T16.500 9v4.500q0 3 2.500 5zM7.500 18.500q0 3 2.500 3t2.500-3"/></svg><span class="absolute -top-1 left-2 rounded-full bg-[#e0264c] px-[3px] text-[9px] leading-[13px] font-medium text-white">21</span></button>
    <button aria-label="Uygulamalar" class="mt-[14px] flex size-7 shrink-0 items-center justify-center rounded-full bg-[#f5f5f5]"><svg class="size-4" viewBox="0 0 16 16" fill="#111"><path d="M0 0h4v4H0zM6 0h4v4H6zM12 0h4v4h-4zM0 6h4v4H0zM6 6h4v4H6zM12 6h4v4h-4zM0 12h4v4H0zM6 12h4v4H6zM12 12h4v4h-4z"/></svg></button>
    <hr class="mt-[9px] w-7 border-[#555]">
    <button aria-label="Yardım" class="mt-3 mb-[6px] flex size-6 shrink-0 items-center justify-center rounded-full border border-current text-[18px] font-light">?</button>
  </aside>
</main>

<!-- Windows taskbar -->
<footer class="h-[31px] shrink-0 overflow-hidden bg-[#fdebcf] font-['Open_Sans',sans-serif] text-[#3a3225]">
  <div class="flex h-10 items-center">
    <button class="flex w-[282px] items-center pl-3 text-left text-[10px] leading-3">
      <span class="relative mr-[5px]"><svg class="h-[14px] w-[22px]" viewBox="0 0 22 14"><path d="M5 14a4.500 4.500 0 0 1 0-9 6 6 0 0 1 11.500 0A4.500 4.500 0 0 1 17 14z" fill="#b9cdf0"/></svg><span class="absolute -top-2 left-[10px] flex size-3 items-center justify-center rounded-full bg-[#b0151f] text-[8px] font-bold text-white">8</span></span>
      <span class="mb-px">8°C<br>Bulutlu</span>
    </button>
    <button aria-label="Başlat" class="ml-[10px]"><svg class="size-[19px]" viewBox="0 0 19 19" fill="#1a9be0"><path d="M0 0h9v9H0zM10 0h9v9h-9zM0 10h9v9H0zM10 10h9v9h-9z"/></svg></button>
    <label class="ml-3 flex h-[26px] w-[182px] items-center rounded-full bg-[#fef9ee] pl-[9px]"><svg class="size-[13px] shrink-0" viewBox="0 0 13 13" fill="none" stroke="#222" stroke-width="1.400"><circle cx="5.500" cy="5.500" r="4.500"/><path d="M9 9l3.500 3.500"/></svg><input aria-label="Ara" placeholder="Ara" class="ml-[9px] w-full bg-transparent text-[11px] outline-none placeholder:text-[#5a5245]"></label>
    <div class="flex items-center [&>button]:flex [&>button]:w-[37px] [&>button]:justify-center">
      <button aria-label="Görev görünümü"><svg class="size-[19px]" viewBox="0 0 19 19"><path d="M1 5h14v13H1z" fill="#222"/><path d="M6 1h12v11H6z" fill="#d8d8d8"/></svg></button>
      <button aria-label="Copilot"><svg class="size-5" viewBox="0 0 20 20"><path d="M7 1h6q2 0 2.500 2l1 3h-4q-2 0-2.500 2L8 14q-.5 2-2.500 2H3q-3 0-2-4l2-8q.8-3 4-3z" fill="#2a8fe0"/><path d="M1.200 11 3 5q2 2 6 2L7 14q-.5 2-2.500 2H3q-2.500-1-1.800-5z" fill="#3cc48a"/><path d="M13 19H7q-2 0-2.500-2l-1-3h4q2 0 2.500-2L12 6q.5-2 2.500-2H17q3 0 2 4l-2 8q-.8 3-4 3z" fill="#d04fb8"/><path d="M6 14h1.500q2 0 2.500-2l3 1-1.800 6H7q-2 0-2.500-2l-1-3z" fill="#f5883a"/><path d="M8.500 8h3.500l-1.200 4H7.500z" fill="#fdf3e4"/></svg></button>
      <button aria-label="Microsoft Store"><svg class="size-[19px]" viewBox="0 0 19 19"><path d="M6 4V1h7v3" fill="none" stroke="#3fb5e0"/><rect y="4" width="19" height="15" rx="2" fill="#17406f"/><path d="M5.500 7.500h3.500V11H5.500z" fill="#e8502f"/><path d="M10 7.500h3.500V11H10z" fill="#7cb928"/><path d="M5.500 12H9v3.500H5.500z" fill="#2aa4e8"/><path d="M10 12h3.500v3.500H10z" fill="#f8b916"/></svg></button>
      <button aria-label="Chrome"><svg class="size-5"><use href="#chrome"/></svg></button>
      <button aria-label="Edge"><svg class="size-5" viewBox="0 0 20 20"><circle cx="10" cy="10" r="10" fill="#1b77c9"/><path d="M0 9.500A10 10 0 0 1 20 8.500q.3 5-5 5-3 0-2.500-2 1-3-2-4.500Q5 4.500 0 9.500z" fill="#3ccf9e"/><path d="M0 9.500A10 10 0 0 1 12 .2Q8 2 10.500 7 5 4.500 0 9.500z" fill="#2fa8dc"/><path d="M0 9.500Q4 3.500 10 6 5 8 6 13q1.500 5 8 5Q3 22.500.3 12z" fill="#1560a8"/><path d="M12.500 11q1-3-2-4.300 4 0 4.500 3-.2 2-2 3z" fill="#fdebcf"/></svg></button>
      <button aria-label="Dosya Gezgini"><svg class="size-5" viewBox="0 0 20 20"><path d="M0 3q0-2 2-2h5l2 2.500h9q2 0 2 2V17H0z" fill="#d99a1f"/><path d="M0 5h20v12q0 2-2 2H2q-2 0-2-2z" fill="#fbcf50"/><path d="M4 14.500h12V19H4z" fill="#1f7ac0"/></svg></button>
      <button aria-label="Spotify"><svg class="size-5" viewBox="0 0 20 20"><circle cx="10" cy="10" r="10" fill="#20d564"/><path d="M4.500 7q6-1.700 11.500 1.200M5 10.200q5.300-1.400 9.800 1M5.500 13.200q4.200-1 8 1" fill="none" stroke="#12301c" stroke-width="1.700" stroke-linecap="round"/></svg></button>
      <button aria-label="Discord"><svg class="size-5" viewBox="0 0 20 20"><circle cx="10" cy="10" r="10" fill="#5762ea"/><path d="M6 6q1.500-.9 2.800-1l.4.800h1.600l.4-.8q1.300.1 2.800 1 2 3.500 1.800 7-1.500 1.300-3 1.500l-.7-1.200H7.900l-.7 1.200q-1.500-.2-3-1.500Q4 9.500 6 6z" fill="#fff"/><circle cx="7.900" cy="10" r="1.200" fill="#5762ea"/><circle cx="12.100" cy="10" r="1.200" fill="#5762ea"/></svg></button>
      <button aria-label="Chrome profili" class="relative"><svg class="size-5"><use href="#chrome"/></svg><span class="absolute -top-1 right-0 flex size-[13px] items-center justify-center rounded-full bg-[#4e3330] text-[8px] text-[#d9c6c2]">Y</span></button>
      <button aria-label="Not Defteri"><svg class="size-[19px]" viewBox="0 0 19 19"><rect x="2" y="2" width="15" height="17" rx="1.500" fill="#4fc3e0"/><path d="M3.500 0v4M6.500 0v4M9.500 0v4M12.500 0v4M15.500 0v4M4.500 8h10M4.500 11h10M4.500 14h7" stroke="#17607a" stroke-width="1.200"/></svg></button>
      <button aria-label="Sohbet uygulaması"><svg class="size-4" viewBox="0 0 16 16"><path d="M8 0a8 7.500 0 1 1-1 15l-3 1v-2.300A7.500 7.500 0 0 1 8 0z" fill="#5b35a0"/><path d="M3.500 9q-.5-3 1.500-4M6.500 9q-.5-3 1.500-4M9 9.500q1.500-1.500 1-4M12 9.500q1.500-1.500 1-4" stroke="#fff" stroke-width="1.500" fill="none"/></svg></button>
      <button aria-label="OBS" class="relative"><svg class="size-[17px]" viewBox="0 0 17 17"><circle cx="8.500" cy="8.500" r="8.500" fill="#1c1c1e"/><g fill="none" stroke="#d0d0d0" stroke-width="1.200"><path d="M8.500 8.500Q4 7 6 2.500M8.500 8.500q1 4.500-5 4.500M8.500 8.500q3.500-3 6.500 1.500"/></g></svg><i class="absolute -top-[3px] right-[5px] size-[10px] rounded-full bg-[#e8101c]"></i></button>
    </div>
    <div class="ml-auto flex items-center">
      <button aria-label="Gizli simgeler"><svg class="size-[10px] rotate-180"><use href="#chev"/></svg></button>
      <svg class="ml-[15px] size-[13px]" viewBox="0 0 13 13"><path d="M0 0h13v13H0z" fill="#333"/><path d="M1 1.500h11v2H1z" fill="#d04a3a"/><path d="M1 4.500h11v2H1z" fill="#d8b032"/><path d="M1 7.500h11v1.800H1z" fill="#4aa84a"/><path d="M1 10.300h11v1.700H1z" fill="#7a4ab8"/></svg>
      <svg class="ml-[13px] size-[14px]" viewBox="0 0 14 14" fill="none" stroke="#333"><path d="M1 6a6 6 0 0 1 11-2M12.500 1v3.500H9M7 13a6 6 0 0 1-5-3M1 13V9.500h3.500"/><circle cx="10.500" cy="10" r="3" fill="#1f78d0" stroke="none"/></svg>
      <svg class="ml-[15px] h-[14px] w-[10px]" viewBox="0 0 10 14" fill="none" stroke="#2b5fa8"><rect x="3" y=".8" width="4" height="8" rx="2" fill="#b9d3ee"/><path d="M1 6.500q0 4 4 4t4-4M5 10.500V13"/></svg>
      <span class="ml-[18px] w-[18px] text-[10px]">TUR</span>
      <svg class="ml-[15px] h-[11px] w-[14px]" viewBox="0 0 14 11" fill="none" stroke="#333" stroke-width="1.100"><path d="M.8 4.200q6.200-6 12.400 0M3 6.500q4-3.800 8 0M5 8.700q2-1.800 4 0"/><circle cx="7" cy="10" r=".7" fill="#333"/></svg>
      <svg class="ml-[6px] h-[11px] w-3" viewBox="0 0 12 11" fill="none" stroke="#333"><path d="M.8 4h1.700L5 1.500v8L2.500 7H.8zM7 4q1 1.500 0 3M8.500 2.500q2 3 0 6M10 1q3 4.500 0 9"/></svg>
      <svg class="ml-2 h-[11px] w-[14px]" viewBox="0 0 14 11"><rect x="2" y="3" width="10" height="7" rx="1.500" fill="#222"/><path d="M12.500 5h1v3h-1zM3 0 0 4.500h2L1.500 8 5 3.500H3z" fill="#222"/></svg>
      <time class="mr-4 mb-px ml-3 text-right text-[10px] leading-[13px]">16:20<br>10.11.2025</time>
    </div>
  </div>
</footer>
</div>

<script>
  const NS = 'http://www.w3.org/2000/svg';
  function add(parent, name, attrs) {
    const el = document.createElementNS(NS, name);
    for (const k in attrs) el.setAttribute(k, attrs[k]);
    parent.appendChild(el);
  }
  const grid = document.getElementById('grid');
  for (let i = 0; i < 15; i++) { const y = Math.round(160 + i * 28.93) + 0.5; add(grid, 'path', { d: `M44 ${y}H1006` }); }
  for (const x of [74, 152, 205, 283, 362, 441, 520, 598, 677, 756, 834, 913, 992]) add(grid, 'path', { d: `M${x + 0.5} 118V602` });
  // [x, high, low, body top, body bottom, rising]
  const candles = [
    [375,584,599,598,600,1],[382,549,600,552,600,1],[389,539,572,552,564,0],[395,521,563,527,563,1],
    [402,487,542,525,529,1],[408,501,550,512,527,1],[415,486,527,486,513,1],[422,483,533,487,513,0],
    [428,484,513,508,512,0],[435,487,520,509,512,0],[441,452,512,483,512,1],[447,469,513,475,484,1],
    [454,439,490,475,485,0],[461,454,489,460,485,1],[467,452,516,459,515,0],[474,474,539,476,515,1],
    [480,431,490,469,478,1],[487,459,506,469,502,0],[493,466,502,468,502,1],[500,458,496,468,495,0],
    [507,453,495,490,495,1],[513,467,507,469,492,1],[520,459,508,469,492,0],[526,472,497,482,492,1],
    [533,450,485,458,483,1],[539,438,470,438,458,1],[546,404,445,408,439,1],[553,363,419,374,409,1],
    [559,357,378,371,375,1],[565,332,379,350,372,1],[572,290,355,310,351,1],[579,305,341,310,315,0]
  ];
  const layer = document.getElementById('candles');
  for (const [x, hi, lo, top, bottom, up] of candles) {
    const fill = up ? '#22ab81' : '#e0264c';
    add(layer, 'rect', { x: x, y: hi, width: 1, height: lo - hi, fill });
    add(layer, 'rect', { x: x - 2, y: top, width: 5, height: bottom - top, fill });
  }
</script>
</body>
</html>
